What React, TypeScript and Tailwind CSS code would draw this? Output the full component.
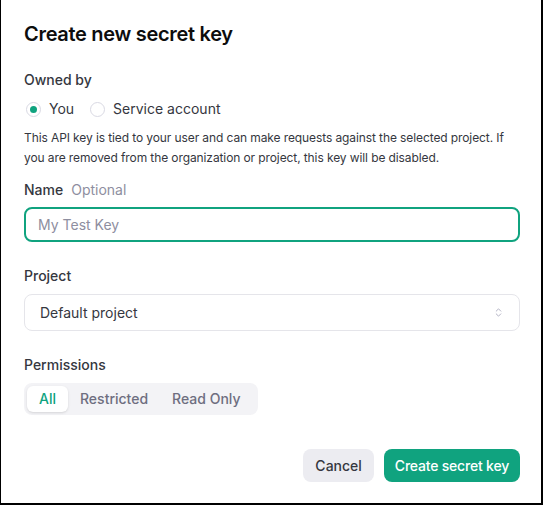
import { ChevronsUpDown } from "lucide-react";

export default function App() {
  return (
    <div
      className="h-[505px] w-[543px] border-l border-r-2 border-b-2 border-black bg-white text-[#0d0d0d]"
      style={{ fontFamily: "Inter, 'Noto Sans', sans-serif" }}
    >
      <div className="flex flex-col pl-[23px] pr-[21px] pt-[20px]">
        <h1 className="text-[20px] font-semibold leading-[28px] tracking-[-0.3px]">Create new secret key</h1>

        <div className="mt-[22px] text-[14px] font-medium leading-[20px] text-[#353740]">Owned by</div>
        <div className="mt-[9px] flex items-center text-[14px] leading-[20px] text-[#353740]">
          <span className="ml-[2px] flex h-[15px] w-[15px] items-center justify-center rounded-full border border-[#d9d9e3]">
            <span className="h-[7px] w-[7px] rounded-full bg-[#10a37f]" />
          </span>
          <span className="ml-[8px]">You</span>
          <span className="ml-[16px] h-[15px] w-[15px] rounded-full border border-[#d9d9e3]" />
          <span className="ml-[8px]">Service account</span>
        </div>
        <p className="mt-[9px] text-[12px] leading-[20px] tracking-[-0.1px] text-[#353740]">
          This API key is tied to your user and can make requests against the selected project. If
          you are removed from the organization or project, this key will be disabled.
        </p>

        <div className="mt-[12px] flex items-baseline gap-[8px] text-[14px] leading-[20px]">
          <span className="font-medium text-[#353740]">Name</span>
          <span className="text-[#8e8ea0]">Optional</span>
        </div>
        <input
          placeholder="My Test Key"
          className="mt-[7px] h-[35px] w-full rounded-[8px] border-2 border-[#10a37f] px-[12px] text-[14px] text-[#353740] outline-none placeholder:text-[#8e8ea0]"
        />

        <div className="mt-[24px] text-[14px] font-medium leading-[20px] text-[#353740]">Project</div>
        <div className="mt-[8px] flex h-[37px] w-full items-center justify-between rounded-[8px] border border-[#e5e5ea] px-[15px] text-[14px] text-[#353740]">
          <span>Default project</span>
          <ChevronsUpDown className="h-[11px] w-[11px] text-[#acacbe]" strokeWidth={2} />
        </div>

        <div className="mt-[24px] text-[14px] font-medium leading-[20px] text-[#353740]">Permissions</div>
        <div className="mt-[8px] flex w-[234px] items-center rounded-[8px] bg-[#f3f3f6] p-[3px] text-[14px] font-medium leading-[20px]">
          <span className="rounded-[6px] bg-white px-[12px] py-[3px] text-[#10a37f] shadow-sm">All</span>
          <span className="px-[12px] py-[3px] text-[#6e6e80]">Restricted</span>
          <span className="px-[12px] py-[3px] text-[#6e6e80]">Read Only</span>
        </div>

        <div className="mt-[34px] flex justify-end gap-[10px]">
          <button className="h-[33px] rounded-[8px] bg-[#ececf1] px-[12px] text-[14px] font-medium text-[#353740]">
            Cancel
          </button>
          <button className="h-[33px] rounded-[8px] bg-[#10a37f] px-[11px] text-[14px] font-medium tracking-[-0.2px] text-white">
            Create secret key
          </button>
        </div>
      </div>
    </div>
  );
}
